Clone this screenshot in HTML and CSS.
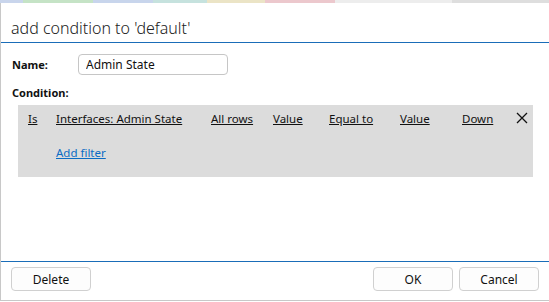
FILE: index.html
```html
<!DOCTYPE html>
<html>
	<head>
		<meta charset="utf-8" />
		<title>add condition</title>
		<link rel="stylesheet" href="styles.css">
	</head>
	<body>
		<div class="strip">
			<span class="s1"></span><span class="s2"></span><span class="s3"></span><span class="s4"></span><span class="s5"></span><span class="s6"></span><span class="s7"></span><span class="s8"></span>
		</div>
		<article class="dialog">
			<header class="title">add condition to 'default'</header>
			<section class="body">
				<div class="field">
					<label>Name:</label>
					<input class="txt" type="text" value="Admin State" />
				</div>
				<div class="label">Condition:</div>
				<div class="panel">
					<div class="row">
						<a class="c-is">Is</a>
						<a class="c-col">Interfaces: Admin State</a>
						<a class="c-rows">All rows</a>
						<a class="c-val">Value</a>
						<a class="c-op">Equal to</a>
						<a class="c-val2">Value</a>
						<a class="c-down">Down</a>
						<span class="close">
							<svg width="12" height="12" viewBox="0 0 12 12"><path d="M1 1L11 11M11 1L1 11" stroke="#111" stroke-width="1.3" fill="none"/></svg>
						</span>
					</div>
					<a class="add">Add filter</a>
				</div>
			</section>
			<footer class="foot">
				<button class="btn">Delete</button>
				<span class="grow"></span>
				<button class="btn">OK</button>
				<button class="btn">Cancel</button>
			</footer>
		</article>
	</body>
</html>
```
FILE: styles.css
```css
*{margin: 0;padding: 0;box-sizing: border-box;}
html,body{height: 100%;}
body{
	font-family: "Noto Sans", "Open Sans", sans-serif;
	font-size: 11.5px;
	color: #111;
	background: #fff;
	display: flex;
	flex-direction: column;
	overflow: hidden;
}
.strip{
	height: 3px;
	display: flex;
	flex: none;
}
.strip span{height: 100%;}
.s1{width: 23px;background: #c9d5ec;}
.s2{width: 70px;background: #c5e3c6;}
.s3{width: 60px;background: #c8d5ec;}
.s4{width: 54px;background: #c6e2de;}
.s5{width: 58px;background: #ebe4c6;}
.s6{width: 70px;background: #ecc8cd;}
.s7{width: 117px;background: #ededed;}
.s8{flex: 1;background: #dedede;}
.dialog{
	flex: 1;
	display: flex;
	flex-direction: column;
	border-left: 1px solid #c8c8c8;
	border-bottom: 1px solid #c8c8c8;
	margin-bottom: 1px;
}
.title{
	height: 40px;
	padding: 14px 0 0 10px;
	font-size: 16px;
	font-weight: 300;
	color: #222;
	border-bottom: 1px solid #1a6db8;
	flex: none;
}
.body{
	flex: 1;
	padding: 11px 16px 0 11px;
}
.field{
	display: flex;
	align-items: center;
	height: 21px;
}
.field label,.label{
	font-weight: bold;
	font-size: 11px;
}
.field label{width: 66px;}
.txt{
	width: 150px;
	height: 21px;
	border: 1px solid #c6c6c6;
	border-radius: 4px;
	padding: 0 7px;
	font: inherit;
	font-size: 12px;
	color: #111;
	outline: none;
}
.label{margin-top: 10px;height: 20px;}
.panel{
	background: #dcdcdc;
	margin-left: 6px;
	height: 72px;
	padding: 4px 0 0 10px;
}
.row{
	display: flex;
	align-items: center;
	height: 18px;
}
.row a{
	text-decoration: underline;
	color: #111;
}
.c-is{width: 28px;}
.c-col{width: 155px;}
.c-rows{width: 62px;}
.c-val{width: 56px;}
.c-op{width: 71px;}
.c-val2{width: 62px;}
.c-down{width: 54px;}
.close{display: flex;}
.add{
	display: inline-block;
	margin: 18px 0 0 28px;
	color: #0b6cc4;
	text-decoration: underline;
}
.foot{
	flex: none;
	height: 39px;
	border-top: 1px solid #1a6db8;
	display: flex;
	align-items: flex-start;
	padding: 5px 10px 0 10px;
	gap: 6px;
}
.grow{flex: 1;}
.btn{
	width: 80px;
	height: 24px;
	background: #fdfdfd;
	border: 1px solid #d0d0d0;
	border-radius: 4px;
	font: inherit;
	font-size: 12px;
	color: #111;
}
```
